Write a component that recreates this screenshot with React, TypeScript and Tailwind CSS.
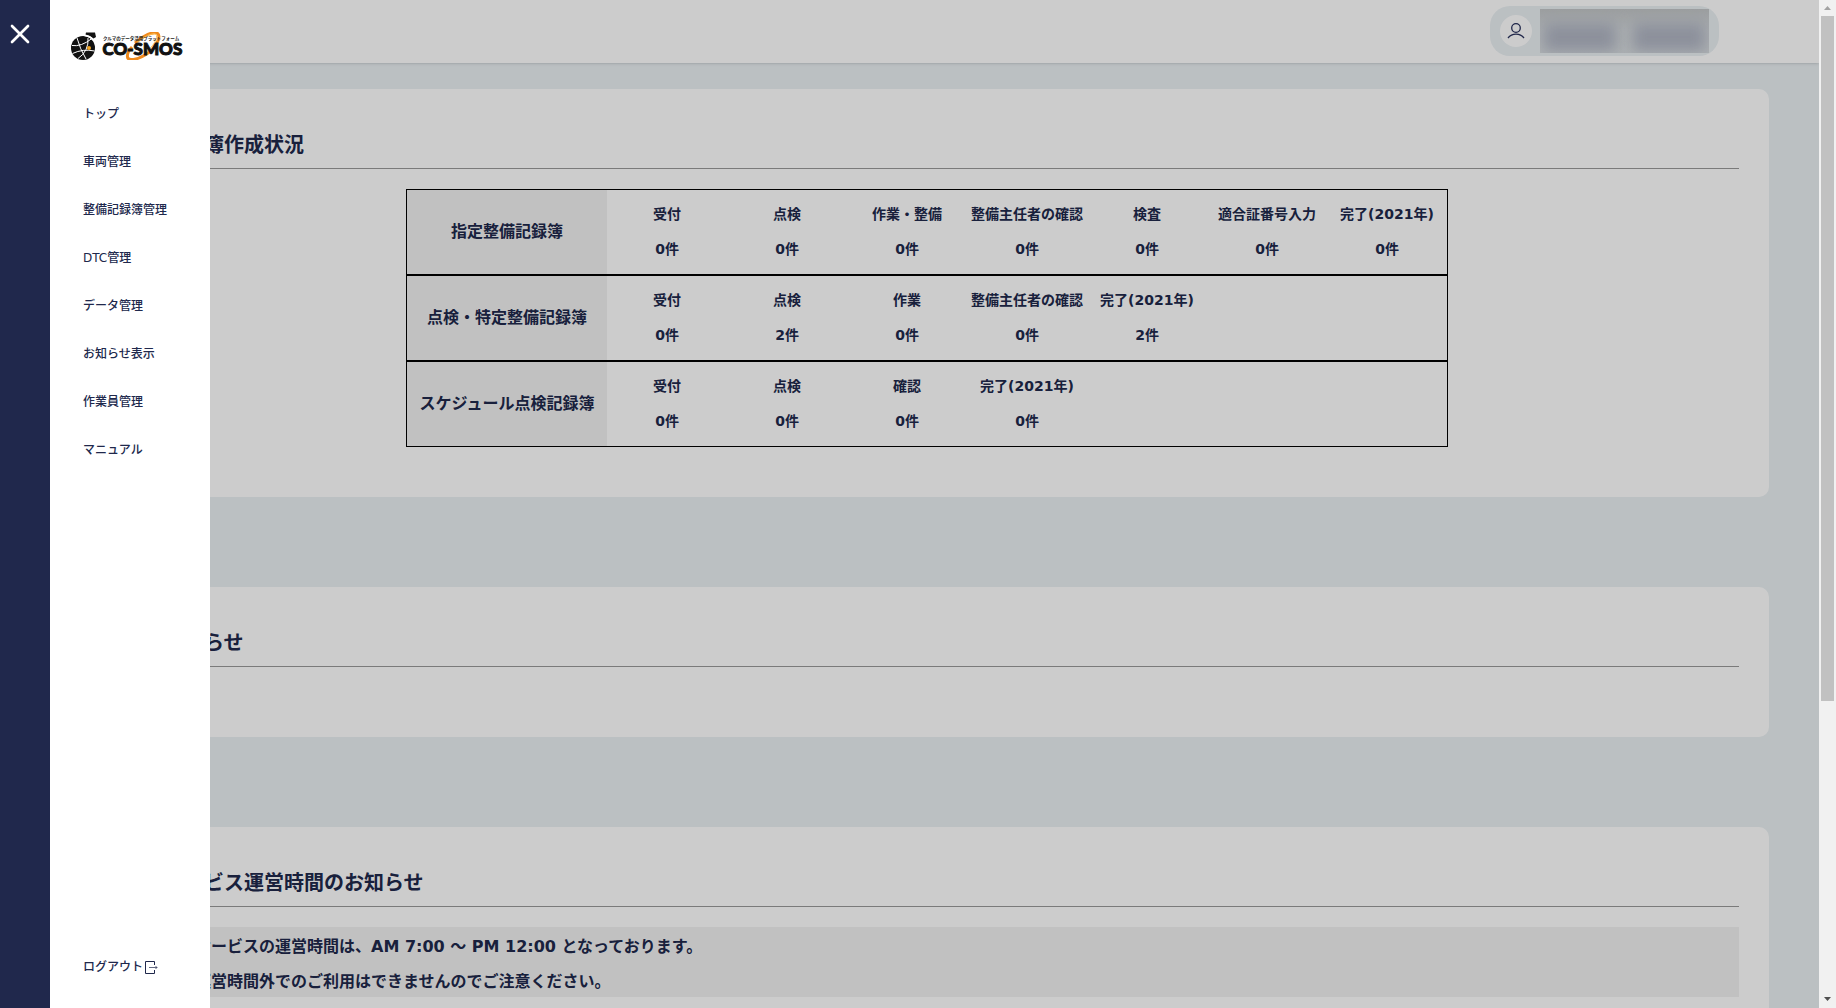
import { X } from "lucide-react"
import type { ReactNode } from "react"

const menuItems = [
  "トップ",
  "車両管理",
  "整備記録簿管理",
  "DTC管理",
  "データ管理",
  "お知らせ表示",
  "作業員管理",
  "マニュアル",
]

type Step = { label: string; count: number }

const records: { name: string; steps: Step[] }[] = [
  {
    name: "指定整備記録簿",
    steps: [
      { label: "受付", count: 0 },
      { label: "点検", count: 0 },
      { label: "作業・整備", count: 0 },
      { label: "整備主任者の確認", count: 0 },
      { label: "検査", count: 0 },
      { label: "適合証番号入力", count: 0 },
      { label: "完了(2021年)", count: 0 },
    ],
  },
  {
    name: "点検・特定整備記録簿",
    steps: [
      { label: "受付", count: 0 },
      { label: "点検", count: 2 },
      { label: "作業", count: 0 },
      { label: "整備主任者の確認", count: 0 },
      { label: "完了(2021年)", count: 2 },
    ],
  },
  {
    name: "スケジュール点検記録簿",
    steps: [
      { label: "受付", count: 0 },
      { label: "点検", count: 0 },
      { label: "確認", count: 0 },
      { label: "完了(2021年)", count: 0 },
    ],
  },
]

const Logo = () => (
  <svg viewBox="0 0 224 56" className="h-7 w-28" role="img" aria-label="CO-SMOS">
    {/* globe with satellite */}
    <circle cx="24" cy="32" r="24" fill="#111" />
    <path d="M30 1H48L50 10L45 13Q39 7 29 5Z" fill="#111" />
    <g fill="none" stroke="#fff" strokeWidth="2">
      <path d="M2 27Q20 30 42 13" />
      <path d="M3 43Q24 33 47 38" />
      <path d="M12 12Q18 34 30 54" />
      <path d="M34 12Q36 38 14 53" />
      <path d="M27 7Q42 8 50 24" strokeWidth="3" />
    </g>
    <circle cx="36" cy="32" r="4" fill="#f5a623" />
    {/* orbit */}
    <path
      d="M128 22C146 6 164 -1 172 2C182 8 170 34 148 46C132 56 114 58 113 50C112 44 116 36 122 30"
      fill="none"
      stroke="#f08a1c"
      strokeWidth="6"
    />
    <path
      d="M132 21C148 8 162 2 169 4C176 8 166 30 146 43"
      fill="none"
      stroke="#ffc65c"
      strokeWidth="2"
    />
    <text
      x="64"
      y="16"
      fontSize="9"
      fontWeight="700"
      fill="#222"
      fontFamily="'Noto Sans CJK JP', sans-serif"
    >
      クルマのデータ活用プラットフォーム
    </text>
    <text
      x="63"
      y="46"
      fontSize="34"
      fontWeight="900"
      fill="#111"
      stroke="#111"
      strokeWidth="2"
      fontFamily="Lato, sans-serif"
    >
      CO-SMOS
    </text>
  </svg>
)

const LogoutIcon = () => (
  <svg viewBox="0 0 13 13" className="size-[13px]" fill="none" stroke="#20284c">
    <path d="M9.5 4V0.5H0.5V12.5H9.5V9" strokeWidth="1" />
    <path d="M4 6.5H12M10.5 5L12 6.5L10.5 8" strokeWidth="0.7" />
  </svg>
)

const UserIcon = () => (
  <svg
    viewBox="0 0 18 16"
    className="h-4 w-[18px]"
    fill="none"
    stroke="#28305c"
    strokeWidth="1.3"
  >
    <circle cx="9" cy="5" r="4.3" />
    <path d="M1 15Q4 11.2 9 11.2T17 15" />
  </svg>
)

const Drawer = () => (
  <div className="fixed inset-y-0 left-0 z-20 flex">
    <div className="w-[50px] bg-[#20284c]">
      <button
        type="button"
        aria-label="閉じる"
        className="mt-[18px] ml-1 flex size-8 items-center justify-center text-white"
      >
        <X size={32} strokeWidth={2} />
      </button>
    </div>
    <nav className="flex w-40 flex-col bg-white text-xs text-[#20284c]">
      <a href="#" className="mt-8 ml-[21px] block w-28">
        <Logo />
      </a>
      <ul className="mt-[30px] flex-1">
        {menuItems.map((item) => (
          <li key={item}>
            <a href="#" className="flex h-12 items-center pl-[33px]">
              {item}
            </a>
          </li>
        ))}
      </ul>
      <a href="#" className="mb-[33px] flex items-center gap-0.5 pl-[33px]">
        ログアウト
        <LogoutIcon />
      </a>
    </nav>
  </div>
)

const Header = () => (
  <header className="relative flex h-[63px] justify-end bg-white pt-1.5 pr-[100px] shadow">
    <button
      type="button"
      aria-label="アカウント"
      className="flex h-[50px] items-center gap-2 rounded-[20px] bg-[#eaf0f3] px-2.5"
    >
      <span className="flex size-8 items-center justify-center rounded-full bg-white">
        <UserIcon />
      </span>
      <span className="flex h-11 w-[169px] items-end justify-between overflow-hidden bg-linear-to-b from-[#c3c6c8] via-[#d5dadd] to-[#d8dde0] px-1 pb-0.5">
        <span className="h-7 w-[72px] bg-[#b0b5c3] blur-[7px]" />
        <span className="h-7 w-[72px] bg-[#b0b5c3] blur-[7px]" />
      </span>
    </button>
  </header>
)

const Card = ({ title, children }: { title: string; children?: ReactNode }) => (
  <section className="mb-[90px] rounded-[10px] bg-white px-[30px] pt-[30px] pb-[50px]">
    <h2 className="mb-5 h-[50px] border-b border-[#999] pl-[49px] text-xl leading-[52px] font-bold">
      {title}
    </h2>
    {children}
  </section>
)

const RecordTable = () => (
  <div className="mx-auto w-[1042px]">
    {records.map((record) => (
      <div key={record.name} className="flex border border-black">
        <h3 className="flex w-[200px] items-center justify-center bg-[#f2f2f2] text-base font-bold">
          {record.name}
        </h3>
        <ul className="flex py-[7px] text-sm leading-[35px] font-bold">
          {record.steps.map((step) => (
            <li key={step.label} className="w-[120px] text-center">
              <p className="whitespace-nowrap">{step.label}</p>
              <p>{step.count}件</p>
            </li>
          ))}
        </ul>
      </div>
    ))}
  </div>
)

const Scrollbar = () => (
  <div className="flex w-[17px] flex-col items-center bg-[#f1f1f1]">
    <svg viewBox="0 0 17 16" className="h-4 w-[17px]">
      <path d="M5 10L8.5 6L12 10Z" fill="#a3a3a3" />
    </svg>
    <div className="h-[68%] w-[13px] bg-[#c1c1c1]" />
    <svg viewBox="0 0 17 17" className="mt-auto h-[17px] w-[17px]">
      <path d="M5 6L8.5 10L12 6Z" fill="#505050" />
    </svg>
  </div>
)

const App = () => {
  return (
    <div className="flex h-screen overflow-hidden font-['DejaVu_Sans','Noto_Sans_CJK_JP',sans-serif] font-medium text-[#20284c]">
      <div className="relative flex-1 overflow-hidden bg-[#eaf0f3]">
        <Header />
        <main className="pt-[26px] pr-[50px] pl-[85px]">
          <Card title="記録簿作成状況">
            <RecordTable />
          </Card>
          <Card title="お知らせ" />
          <Card title="サービス運営時間のお知らせ">
            <div className="h-[70px] bg-[#f2f2f2] pt-0.5 pl-20 text-base leading-[35px] font-bold">
              <p>サービスの運営時間は、AM 7:00 ～ PM 12:00 となっております。</p>
              <p>運営時間外でのご利用はできませんのでご注意ください。</p>
            </div>
          </Card>
        </main>
        <div className="absolute inset-0 bg-black/20" />
      </div>
      <Scrollbar />
      <Drawer />
    </div>
  )
}

export default App
